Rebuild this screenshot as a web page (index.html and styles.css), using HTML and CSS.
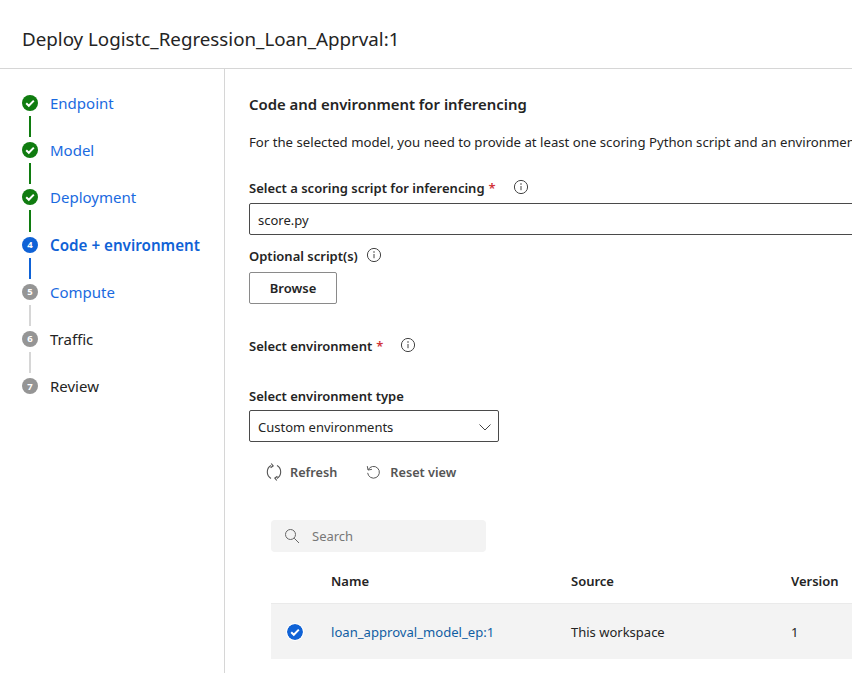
FILE: index.html
```html
<!DOCTYPE html>
<html lang="en">
<head>
<meta charset="utf-8">
<title>Deploy</title>
<link rel="stylesheet" href="styles.css">
</head>
<body>
<header class="top"><h1>Deploy Logistc_Regression_Loan_Apprval:1</h1></header>
<div class="layout">
  <nav class="steps">
    <div class="step"><span class="dot done"><svg viewBox="0 0 16 16" width="16" height="16"><path d="M4.2 8.3l2.6 2.5 5-5.2" fill="none" stroke="#fff" stroke-width="2"/></svg></span><a class="lbl link">Endpoint</a></div>
    <div class="conn green"></div>
    <div class="step"><span class="dot done"><svg viewBox="0 0 16 16" width="16" height="16"><path d="M4.2 8.3l2.6 2.5 5-5.2" fill="none" stroke="#fff" stroke-width="2"/></svg></span><a class="lbl link">Model</a></div>
    <div class="conn green"></div>
    <div class="step"><span class="dot done"><svg viewBox="0 0 16 16" width="16" height="16"><path d="M4.2 8.3l2.6 2.5 5-5.2" fill="none" stroke="#fff" stroke-width="2"/></svg></span><a class="lbl link">Deployment</a></div>
    <div class="conn green"></div>
    <div class="step"><span class="dot cur">4</span><a class="lbl link strong">Code + environment</a></div>
    <div class="conn blue"></div>
    <div class="step"><span class="dot">5</span><a class="lbl link">Compute</a></div>
    <div class="conn"></div>
    <div class="step"><span class="dot">6</span><span class="lbl">Traffic</span></div>
    <div class="conn"></div>
    <div class="step"><span class="dot">7</span><span class="lbl">Review</span></div>
  </nav>
  <main class="main">
    <h2>Code and environment for inferencing</h2>
    <p class="intro">For the selected model, you need to provide at least one scoring Python script and an environment to run it.</p>
    <div class="label l-score">Select a scoring script for inferencing <span class="req">*</span><svg class="info i-wide" viewBox="0 0 16 16" width="16" height="16"><circle cx="8" cy="8" r="6.6" fill="none" stroke="#444" stroke-width="1"/><path d="M8 7v4.2" stroke="#444" stroke-width="1"/><circle cx="8" cy="5" r=".8" fill="#444"/></svg></div>
    <div class="input">score.py</div>
    <div class="label l-opt">Optional script(s)<svg class="info i-near" viewBox="0 0 16 16" width="16" height="16"><circle cx="8" cy="8" r="6.6" fill="none" stroke="#444" stroke-width="1"/><path d="M8 7v4.2" stroke="#444" stroke-width="1"/><circle cx="8" cy="5" r=".8" fill="#444"/></svg></div>
    <button class="btn">Browse</button>
    <div class="label l-env">Select environment <span class="req">*</span><svg class="info i-wide" viewBox="0 0 16 16" width="16" height="16"><circle cx="8" cy="8" r="6.6" fill="none" stroke="#444" stroke-width="1"/><path d="M8 7v4.2" stroke="#444" stroke-width="1"/><circle cx="8" cy="5" r=".8" fill="#444"/></svg></div>
    <div class="label l-type">Select environment type</div>
    <div class="dropdown"><span>Custom environments</span><svg viewBox="0 0 16 16" width="16" height="16"><path d="M2.5 5.5L8 11l5.5-5.5" fill="none" stroke="#444" stroke-width="1"/></svg></div>
    <div class="toolbar">
      <span class="tool"><svg viewBox="0 0 18 18" width="18" height="18"><path d="M6 2.6A7.4 7.4 0 0 0 6 15.4M12 15.4A7.4 7.4 0 0 0 12 2.6" fill="none" stroke="#555" stroke-width="1.1"/><path d="M6.2 .5L8.2 2.8 5.6 4.8M11.8 17.5L9.8 15.2 12.4 13.2" fill="none" stroke="#555" stroke-width="1.1"/></svg>Refresh</span>
      <span class="tool tool-wide"><svg viewBox="0 0 18 18" width="16" height="16"><path d="M3.6 6.5A6.6 6.6 0 1 1 3 10" fill="none" stroke="#555" stroke-width="1.1"/><path d="M2.6 2.4L3.4 6.8 7.8 6" fill="none" stroke="#555" stroke-width="1.1"/></svg>Reset view</span>
    </div>
    <div class="search"><svg viewBox="0 0 16 16" width="16" height="16"><circle cx="6.5" cy="6.5" r="5" fill="none" stroke="#666" stroke-width="1"/><path d="M10.2 10.2L15 15" stroke="#666" stroke-width="1"/></svg><span>Search</span></div>
    <div class="row head"><span class="c-check"></span><span class="c-name">Name</span><span class="c-src">Source</span><span class="c-ver">Version</span></div>
    <div class="row item"><span class="c-check"><svg class="radio" viewBox="0 0 16 16" width="16" height="16"><circle cx="8" cy="8" r="8" fill="#0f62d6"/><path d="M4.2 8.3l2.6 2.5 5-5.2" fill="none" stroke="#fff" stroke-width="2"/></svg></span><a class="c-name tlink">loan_approval_model_ep:1</a><span class="c-src">This workspace</span><span class="c-ver">1</span></div>
  </main>
</div>
</body>
</html>
```
FILE: styles.css
```css
* { box-sizing: border-box; }
html, body { margin: 0; height: 100%; overflow: hidden; background: #fff; }
body { font-family: "Noto Sans", "Open Sans", sans-serif; font-size: 13px; color: #242424; width: 852px; height: 673px; }
.top { height: 69px; border-bottom: 1px solid #d6d6d6; padding: 8px 22px 0; display: flex; align-items: center; }
.top h1 { margin: 0; font-size: 18.75px; font-weight: 400; white-space: nowrap; }
.layout { display: flex; height: 604px; }
.steps { width: 225px; flex: none; border-right: 1px solid #d6d6d6; padding: 26px 0 0 22px; }
.step { display: flex; align-items: center; height: 16px; }
.dot { width: 16px; height: 16px; border-radius: 50%; background: #959595; color: #fff; font-size: 9.5px; font-weight: 700; display: flex; align-items: center; justify-content: center; flex: none; }
.dot.done { background: #107c10; }
.dot.cur { background: #0f62d6; }
.lbl { margin-left: 12px; font-size: 15px; white-space: nowrap; }
.link { color: #1a6ae0; }
.strong { color: #0f62d6; font-weight: 600; font-size: 15.2px; }
.conn { width: 2px; height: 31.2px; margin-left: 7px; padding: 5px 0; background: #d6d6d6; background-clip: content-box; }
.conn.green { background-color: #107c10; }
.conn.blue { background-color: #0f62d6; }
.main { flex: 1; min-width: 0; padding: 25px 0 0 24px; overflow: hidden; }
h2 { margin: 0; font-size: 14.9px; font-weight: 600; line-height: 20px; white-space: nowrap; }
.intro { margin: 18px 0 0; line-height: 20px; font-size: 13.2px; white-space: nowrap; }
.label { font-weight: 600; font-size: 13px; line-height: 20px; white-space: nowrap; display: flex; align-items: center; }
.req { color: #d13438; margin-left: 4px; }
.info { flex: none; }
.i-wide { margin-left: 17px; margin-top: -2px; }
.i-near { margin-left: 8px; margin-top: -2px; }
.l-score { margin-top: 26px; }
.input { width: 640px; height: 32px; margin-top: 5px; border: 1px solid #4a4a4a; border-radius: 2px; padding: 1px 8px 0; display: flex; align-items: center; }
.l-opt { margin-top: 11px; }
.btn { display: block; width: 88px; height: 32px; margin-top: 6px; border: 1px solid #8a8a8a; border-radius: 2px; background: #fff; font: 600 13px "Noto Sans", sans-serif; color: #242424; }
.l-env { margin-top: 32px; }
.l-type { margin-top: 30px; }
.dropdown { width: 250px; height: 32px; margin-top: 4px; border: 1px solid #4a4a4a; border-radius: 2px; padding: 1px 5px 0 8px; display: flex; align-items: center; justify-content: space-between; }
.toolbar { display: flex; gap: 28px; margin: 20px 0 0 16px; height: 20px; align-items: center; }
.tool { display: flex; align-items: center; gap: 7px; font-weight: 600; font-size: 12.7px; color: #555; }
.tool-wide { gap: 9px; }
.search { width: 215px; height: 32px; margin: 38px 0 0 22px; background: #f3f3f3; border-radius: 4px; display: flex; align-items: center; gap: 12px; padding-left: 13px; color: #777; }
.row { display: flex; align-items: center; width: 640px; margin-left: 22px; }
.head { height: 52px; padding-top: 6px; font-weight: 600; border-bottom: 1px solid #eaeaea; }
.item { height: 55px; padding-top: 1px; background: #f3f3f3; }
.c-check { width: 60px; flex: none; padding-left: 16px; display: flex; }
.radio { border-radius: 50%; box-shadow: 0 0 0 1px #fff; }
.c-name { width: 240px; flex: none; }
.c-src { width: 220px; flex: none; }
.tlink { color: #115ea3; font-size: 13.1px; }
```
